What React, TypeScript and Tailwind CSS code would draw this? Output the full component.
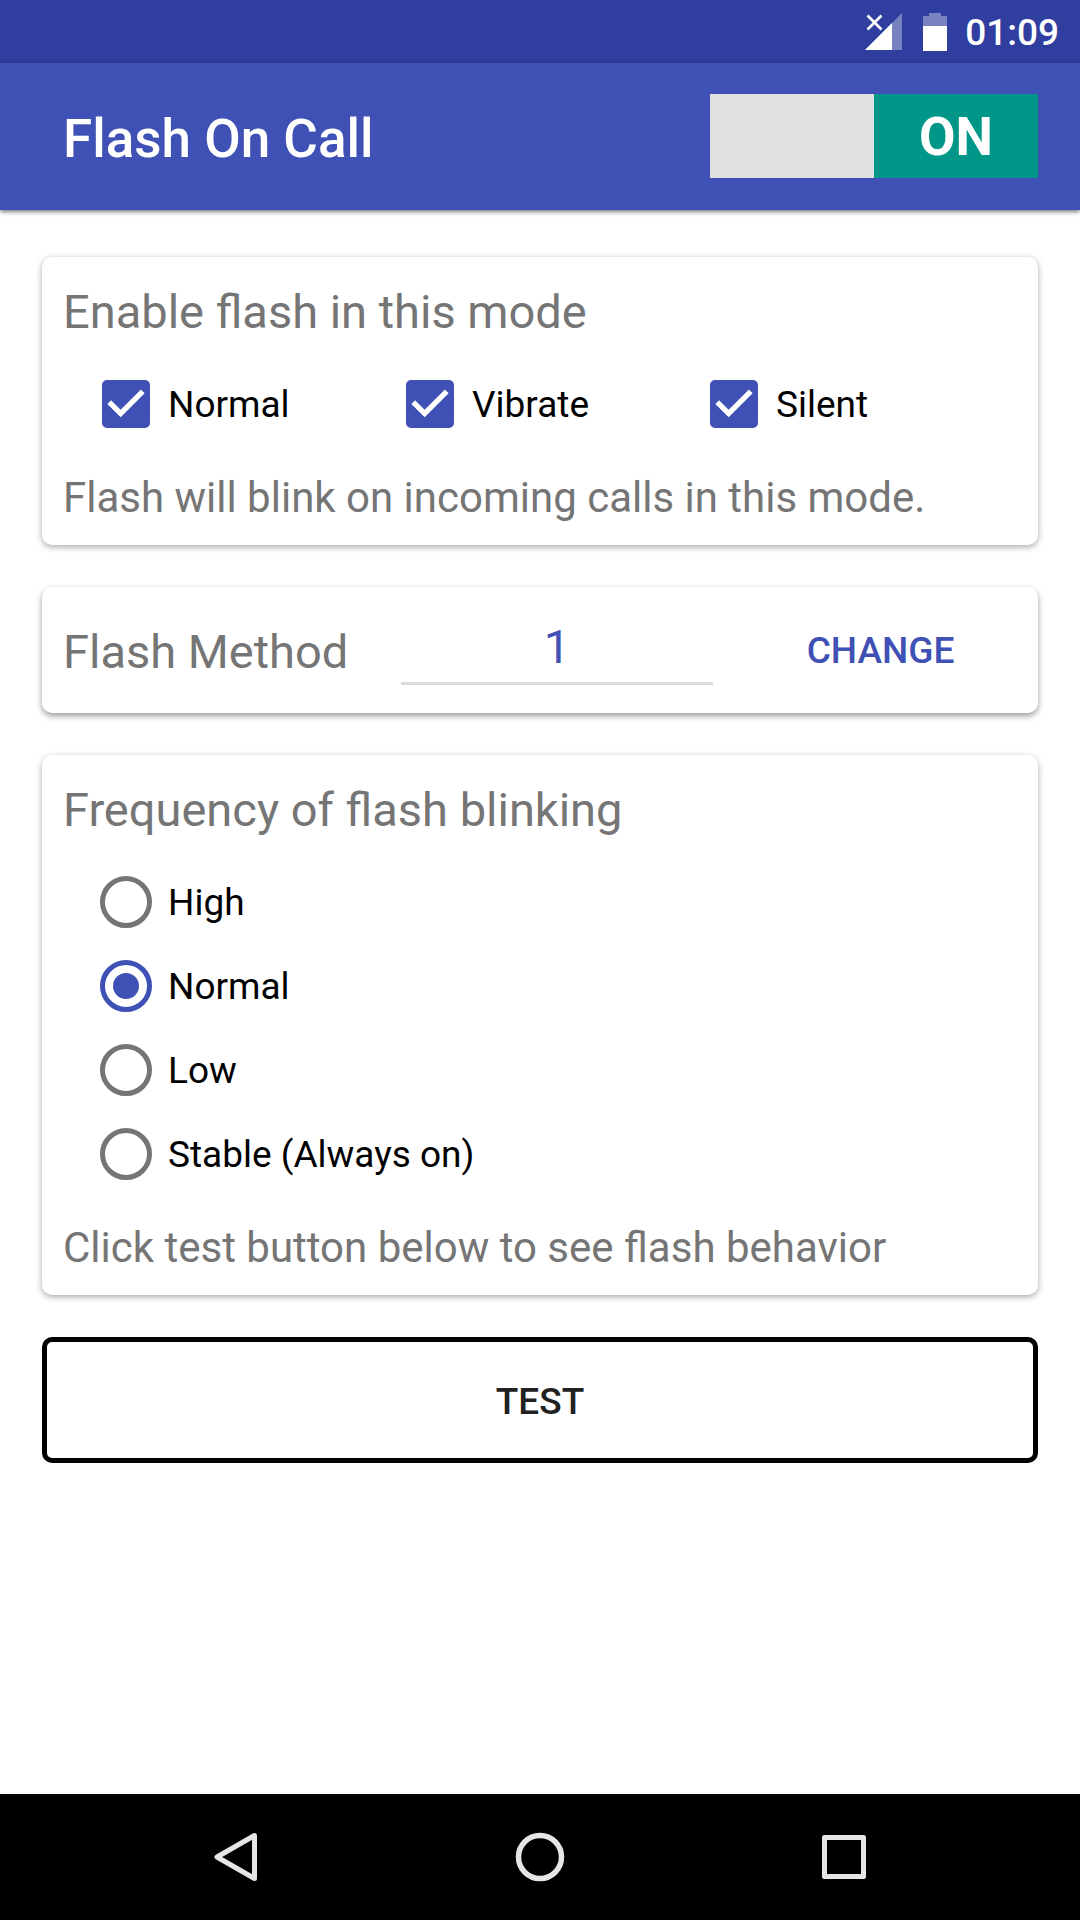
import { useState, type ReactNode } from "react";

const modes = ["Normal", "Vibrate", "Silent"];
const frequencies = ["High", "Normal", "Low", "Stable (Always on)"];

function StatusBar() {
  return (
    <div className="flex items-center justify-end bg-[#303f9f] pr-[21px] text-white">
      <svg width="38" height="38" viewBox="0 0 38 38" className="mr-5" aria-hidden="true">
        <path d="M37 0V37H0Z" fill="#fff" fillOpacity="0.35" />
        <path d="M27 10V37H0Z" fill="#fff" />
        <path d="M3 3L16 16M16 3L3 16" stroke="#303f9f" strokeWidth="6" fill="none" />
        <path d="M2.500 2.500L16.500 16.500M16.500 2.500L2.500 16.500" stroke="#fff" strokeWidth="2.600" fill="none" />
      </svg>
      <svg width="24" height="38" viewBox="0 0 24 38" className="mr-[18px]" aria-hidden="true">
        <path d="M0 13V3H6V0H18V3H24V13Z" fill="#fff" fillOpacity="0.35" />
        <path d="M0 13H24V38H0Z" fill="#fff" />
      </svg>
      <span className="pt-[3px] text-[37px] leading-[60px] font-medium">01:09</span>
    </div>
  );
}

function AppBar() {
  const [on, setOn] = useState(true);
  return (
    <header className="relative flex items-center justify-between bg-[#3f51b5] pt-[31px] pr-[42px] pb-[32px] pl-[63px] text-white shadow-[0_2px_4px_rgba(0,0,0,0.5)]">
      <h1 className="pt-[6px] text-[53px] leading-[64px] font-medium">Flash On Call</h1>
      <button
        type="button"
        role="switch"
        aria-checked={on}
        aria-label="Flash on call"
        onClick={() => setOn(!on)}
        className="grid w-[328px] grid-cols-2 bg-[#e0e0e0] text-[53px] leading-[82px] font-bold"
      >
        {on ? (
          <span className="col-start-2 bg-[#009688] pt-[2px]">ON</span>
        ) : (
          <span className="bg-[#9e9e9e] pt-[2px]">OFF</span>
        )}
      </button>
    </header>
  );
}

function Card({ title, note, children }: { title: string; note: string; children: ReactNode }) {
  return (
    <section className="rounded-[10px] bg-white px-[21px] pt-[27px] pb-[22px] shadow-[0_2px_6px_rgba(0,0,0,0.35)]">
      <h2 className="text-[47px] leading-[56px] text-[#757575]">{title}</h2>
      <div className="mt-[22px] mb-[27px] px-[21px]">{children}</div>
      <p className="text-[42px] leading-[50px] text-[#757575]">{note}</p>
    </section>
  );
}

function ModeOption({ label }: { label: string }) {
  return (
    <label className="flex h-[84px] items-center pl-[18px] text-[37px] text-black">
      <span className="relative mr-[18px] size-12">
        <input
          type="checkbox"
          defaultChecked
          className="peer block size-12 appearance-none rounded-[5px] border-[5px] border-[#757575] checked:border-[#3f51b5] checked:bg-[#3f51b5]"
        />
        <svg
          viewBox="3 3 18 18"
          className="pointer-events-none absolute inset-0 hidden size-12 peer-checked:block"
          aria-hidden="true"
        >
          <path d="M10 17l-5-5 1.410-1.410L10 14.170l7.590-7.590L19 8z" fill="#fff" />
        </svg>
      </span>
      <span className="pt-[2px]">{label}</span>
    </label>
  );
}

function FrequencyOption({ label }: { label: string }) {
  return (
    <label className="flex h-[84px] items-center pl-4 text-[37px] text-black">
      <input
        type="radio"
        name="frequency"
        defaultChecked={label === "Normal"}
        className="mr-4 grid size-[52px] appearance-none place-items-center rounded-full border-[5px] border-[#757575] before:size-[26px] before:rounded-full checked:border-[#3f51b5] checked:before:bg-[#3f51b5]"
      />
      <span className="pt-[2px]">{label}</span>
    </label>
  );
}

function MethodCard() {
  return (
    <section className="grid grid-cols-[349fr_332fr_315fr] items-center rounded-[10px] bg-white pt-[25px] pb-[28px] shadow-[0_3px_6px_rgba(0,0,0,0.4)]">
      <label htmlFor="method" className="pt-[6px] pl-[21px] text-[47px] leading-[56px] text-[#757575]">
        Flash Method
      </label>
      <input
        id="method"
        type="text"
        defaultValue="1"
        className="mx-[10px] min-w-0 border-b-[3px] border-[#dcdcdc] bg-transparent pt-[5px] pb-[6px] text-center text-[47px] leading-[59px] text-[#3f51b5]"
      />
      <button type="button" className="justify-self-center pt-[4px] text-[37px] leading-[56px] font-medium text-[#3f51b5]">
        CHANGE
      </button>
    </section>
  );
}

function NavBar() {
  return (
    <nav aria-label="System" className="grid grid-cols-3 bg-black px-[84px] py-[37px]">
      <button type="button" aria-label="Back" className="flex justify-center">
        <svg width="52" height="52" viewBox="0 0 52 52" fill="none" stroke="#e6e6e6" strokeWidth="5" strokeLinejoin="round">
          <path d="M44.500 4.500V47.500L7 26Z" />
        </svg>
      </button>
      <button type="button" aria-label="Home" className="flex justify-center">
        <svg width="52" height="52" viewBox="0 0 52 52" fill="none" stroke="#e6e6e6" strokeWidth="5.500">
          <circle cx="26" cy="26" r="21.500" />
        </svg>
      </button>
      <button type="button" aria-label="Recent apps" className="flex justify-center">
        <svg width="52" height="52" viewBox="0 0 52 52" fill="none" stroke="#e6e6e6" strokeWidth="5" strokeLinejoin="round">
          <path d="M6.500 6.500H45.500V45.500H6.500Z" />
        </svg>
      </button>
    </nav>
  );
}

export default function App() {
  return (
    <div className="flex min-h-screen flex-col bg-white font-['Roboto',sans-serif]">
      <StatusBar />
      <AppBar />
      <main className="flex flex-1 flex-col gap-[42px] px-[42px] pt-[47px]">
        <Card title="Enable flash in this mode" note="Flash will blink on incoming calls in this mode.">
          <div className="grid grid-cols-3">
            {modes.map((mode) => (
              <ModeOption key={mode} label={mode} />
            ))}
          </div>
        </Card>
        <MethodCard />
        <Card title="Frequency of flash blinking" note="Click test button below to see flash behavior">
          {frequencies.map((frequency) => (
            <FrequencyOption key={frequency} label={frequency} />
          ))}
        </Card>
        <button
          type="button"
          className="rounded-[10px] border-[5px] border-black pt-[32px] pb-[28px] text-[37px] leading-[56px] font-medium text-[#212121]"
        >
          TEST
        </button>
      </main>
      <NavBar />
    </div>
  );
}
